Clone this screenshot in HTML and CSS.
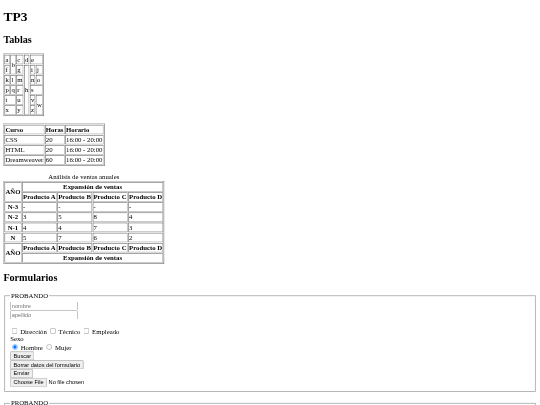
FILE: index.html
```html
<!DOCTYPE html>
<html lang="es">
<head>
    <meta charset="UTF-8">
    <title>TP3</title>
    <link rel="stylesheet" href="styles.css">
</head>
<body>
    <h1>TP3</h1>
    <h2>Tablas</h2>

    <table border="1">
        <tr><td>a</td><td rowspan="2">b</td><td>c</td><td>d</td><td colspan="2">e</td></tr>
        <tr><td>f</td><td>g</td><td rowspan="5">h</td><td>i</td><td>j</td></tr>
        <tr><td>k</td><td>l</td><td>m</td><td>n</td><td>o</td></tr>
        <tr><td>p</td><td>q</td><td>r</td><td colspan="2">s</td></tr>
        <tr><td colspan="2">t</td><td>u</td><td>v</td><td rowspan="2">w</td></tr>
        <tr><td colspan="2">x</td><td>y</td><td>z</td></tr>
    </table>
    <br>

    <table border="1" class="cursos">
        <tr><th>Curso</th><th>Horas</th><th>Horario</th></tr>
        <tr><td>CSS</td><td>20</td><td>16:00 - 20:00</td></tr>
        <tr><td>HTML</td><td>20</td><td>16:00 - 20:00</td></tr>
        <tr><td>Dreamweaver</td><td>60</td><td>16:00 - 20:00</td></tr>
    </table>
    <br>

    <table border="1">
        <caption>Análisis de ventas anuales</caption>
        <thead>
            <tr><th rowspan="2">AÑO</th><th colspan="4">Expansión de ventas</th></tr>
            <tr><th>Producto A</th><th>Producto B</th><th>Producto C</th><th>Producto D</th></tr>
        </thead>
        <tbody>
            <tr><th>N-3</th><td>-</td><td>-</td><td>-</td><td>-</td></tr>
            <tr><th>N-2</th><td>3</td><td>5</td><td>8</td><td>4</td></tr>
            <tr><th>N-1</th><td>4</td><td>4</td><td>7</td><td>3</td></tr>
            <tr><th>N</th><td>5</td><td>7</td><td>6</td><td>2</td></tr>
        </tbody>
        <tfoot>
            <tr><th rowspan="2">AÑO</th><th>Producto A</th><th>Producto B</th><th>Producto C</th><th>Producto D</th></tr>
            <tr><th colspan="4">Expansión de ventas</th></tr>
        </tfoot>
    </table>

    <h2>Formularios</h2>

    <form>
        <fieldset>
            <legend>PROBANDO</legend>
            <input type="text" placeholder="nombre"><br>
            <input type="text" placeholder="apellido"><br>
            <br>
            <input type="checkbox"> Dirección
            <input type="checkbox"> Técnico
            <input type="checkbox"> Empleado<br>
            Sexo<br>
            <input type="radio" name="sexo" checked> Hombre
            <input type="radio" name="sexo"> Mujer<br>
            <input type="button" value="Buscar"><br>
            <input type="reset" value="Borrar datos del formulario"><br>
            <input type="submit" value="Enviar"><br>
            <input type="file">
        </fieldset>
        <br>
        <fieldset>
            <legend>PROBANDO</legend>
            <input type="text" placeholder="nombre"><br>
            <input type="text" placeholder="apellido">
        </fieldset>
    </form>
</body>
</html>
```

FILE: styles.css
```css
/* the page is laid out at 1280px and shown shrunk into the 540px window */
html {
    overflow: hidden;
}

body {
    box-sizing: border-box;
    width: 1280px;
    margin: 0;
    padding: 21.44px 8px 8px;
    font-family: "Liberation Serif", serif;
    transform: scale(0.421875);
    transform-origin: 0 0;
    filter: blur(1px);
}

h1 {
    margin-top: 0;
}

.cursos th {
    text-align: left;
}

fieldset {
    border: 2px solid #aaa;
}

input,
button {
    font-family: "Liberation Sans", sans-serif;
}

input[type="text"] {
    width: 152px;
}
```
